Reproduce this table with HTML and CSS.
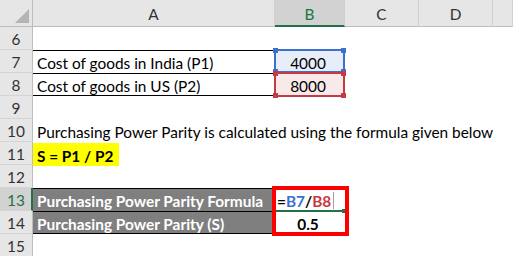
FILE: index.html
```html
<!DOCTYPE html>
<html>
<head>
<meta charset="utf-8">
<link rel="stylesheet" href="styles.css">
</head>
<body>
<div class="sheet">
  <div class="corner"><span class="tri"></span></div>
  <div class="ch">A</div>
  <div class="ch ch-sel">B</div>
  <div class="ch">C</div>
  <div class="ch">D</div>
  <div class="ch"></div>

  <div class="rh">6</div>
  <div class="cell rest-a"></div>

  <div class="rh">7</div>
  <div class="cell a-box">Cost of goods in India (P1)</div>
  <div class="cell num">
    <div class="ref ref-blue"><span class="h tl"></span><span class="h tr"></span><span class="h bl"></span><span class="h br"></span></div>
    <span class="val">4000</span>
  </div>
  <div class="cell rest-c"></div>

  <div class="rh">8</div>
  <div class="cell a-box a-last">Cost of goods in US (P2)</div>
  <div class="cell num">
    <div class="ref ref-red"><span class="h tl"></span><span class="h tr"></span><span class="h bl"></span><span class="h br"></span></div>
    <span class="val">8000</span>
  </div>
  <div class="cell rest-c"></div>

  <div class="rh">9</div>
  <div class="cell rest-a"></div>

  <div class="rh">10</div>
  <div class="cell rest-a overflow">Purchasing Power Parity is calculated using the formula given below</div>

  <div class="rh">11</div>
  <div class="cell rest-a"><span class="hl">S = P1 / P2</span></div>

  <div class="rh">12</div>
  <div class="cell rest-a"></div>

  <div class="rh rh-sel">13</div>
  <div class="cell dark">Purchasing Power Parity Formula</div>
  <div class="cell edit">
    <div class="mark"></div>
    <span class="f">=<span class="fb">B7</span>/<span class="fr">B8</span></span><span class="caret"></span>
    <span class="sel-line"></span>
  </div>
  <div class="cell rest-c"></div>

  <div class="rh">14</div>
  <div class="cell dark dark-last">Purchasing Power Parity (S)</div>
  <div class="cell num bold"><span class="val">0.5</span></div>
  <div class="cell rest-c"></div>

  <div class="rh">15</div>
  <div class="cell rest-a"></div>
</div>
</body>
</html>
```

FILE: styles.css
```css
html, body {
  margin: 0;
  padding: 0;
  background: #ffffff;
}

.sheet {
  display: grid;
  grid-template-columns: 33px 242px 70px 74px 74px 20px;
  grid-template-rows: 27px repeat(10, 23px);
  width: 513px;
  height: 256px;
  overflow: hidden;
  font-family: Lato, "Liberation Sans", sans-serif;
  font-size: 15.4px;
  color: #000;
}

.corner {
  background: #e6e6e6;
  border-right: 1px solid #bdbdbd;
  border-bottom: 1px solid #bdbdbd;
  box-sizing: border-box;
  position: relative;
}

.tri {
  position: absolute;
  right: 3px;
  bottom: 3px;
  width: 0;
  height: 0;
  border-left: 14px solid transparent;
  border-bottom: 14px solid #b4b4b4;
}

.ch {
  background: #e6e6e6;
  border-right: 1px solid #d0d0d0;
  border-bottom: 1px solid #bdbdbd;
  box-sizing: border-box;
  display: flex;
  align-items: center;
  justify-content: center;
  color: #333;
  padding-top: 2px;
}

.ch-sel {
  background: #d2d2d2;
  color: #217346;
  border-bottom: 2px solid #217346;
}

.rh {
  background: #e6e6e6;
  border-right: 1px solid #bdbdbd;
  border-bottom: 1px solid #d4d4d4;
  box-sizing: border-box;
  display: flex;
  align-items: center;
  justify-content: center;
  color: #333;
  padding-top: 2px;
}

.rh-sel {
  background: #d2d2d2;
  color: #217346;
  border-right: 2px solid #217346;
  padding-left: 1px;
}

.cell {
  box-sizing: border-box;
  display: flex;
  align-items: center;
  padding: 2px 4px 0 4px;
  white-space: nowrap;
  position: relative;
}

.rest-a {
  grid-column: 2 / -1;
}

.rest-c {
  grid-column: 4 / -1;
}

.a-box {
  border-top: 1px solid #000;
}

.a-last {
  border-bottom: 1px solid #000;
}

.overflow {
  overflow: visible;
}

.hl {
  background: #ffff00;
  font-weight: bold;
  margin-left: -4px;
  padding: 0 4px;
  width: 78px;
  height: 21px;
  display: flex;
  align-items: center;
  padding-top: 2px;
  box-sizing: content-box;
}

.num {
  justify-content: center;
}

.bold {
  font-weight: bold;
}

.val {
  position: relative;
  z-index: 2;
  margin-left: -4px;
}

.ref {
  position: absolute;
  left: -1px;
  top: -1px;
  right: 0;
  bottom: 0;
  border: 2px solid;
  z-index: 1;
}

.ref-blue {
  border-color: #3c70cf;
  background: #e7eef9;
}

.ref-red {
  border-color: #c53a44;
  background: #f9e9e9;
  top: -1px;
  bottom: -1px;
}

.h {
  position: absolute;
  width: 5px;
  height: 5px;
  background: inherit;
}

.ref-blue .h { background: #3c70cf; }
.ref-red .h { background: #c53a44; }

.tl { left: -3px; top: -3px; }
.tr { right: -3px; top: -3px; }
.bl { left: -3px; bottom: -3px; }
.br { right: -3px; bottom: -3px; }

.dark {
  background: #7f7f7f;
  color: #ffffff;
  font-weight: bold;
  border-top: 1px solid #000;
}

.dark-last {
  border-bottom: 1px solid #000;
}

.edit {
  font-weight: bold;
  padding-left: 2px;
}

.fb { color: #3c70cf; }
.fr { color: #c53a44; }

.caret {
  display: inline-block;
  width: 1px;
  height: 17px;
  background: #a0a0a0;
  margin-left: 2px;
}

.sel-line {
  position: absolute;
  left: 1px;
  right: 2px;
  bottom: -1px;
  height: 2px;
  background: #217346;
}

.sel-line::after {
  content: "";
  position: absolute;
  right: -3px;
  top: -1px;
  width: 4px;
  height: 4px;
  background: #217346;
}

.mark {
  position: absolute;
  left: -3px;
  top: -2px;
  width: 77px;
  height: 50px;
  border: 4px solid #ff0000;
  box-sizing: border-box;
  z-index: 5;
}
```
